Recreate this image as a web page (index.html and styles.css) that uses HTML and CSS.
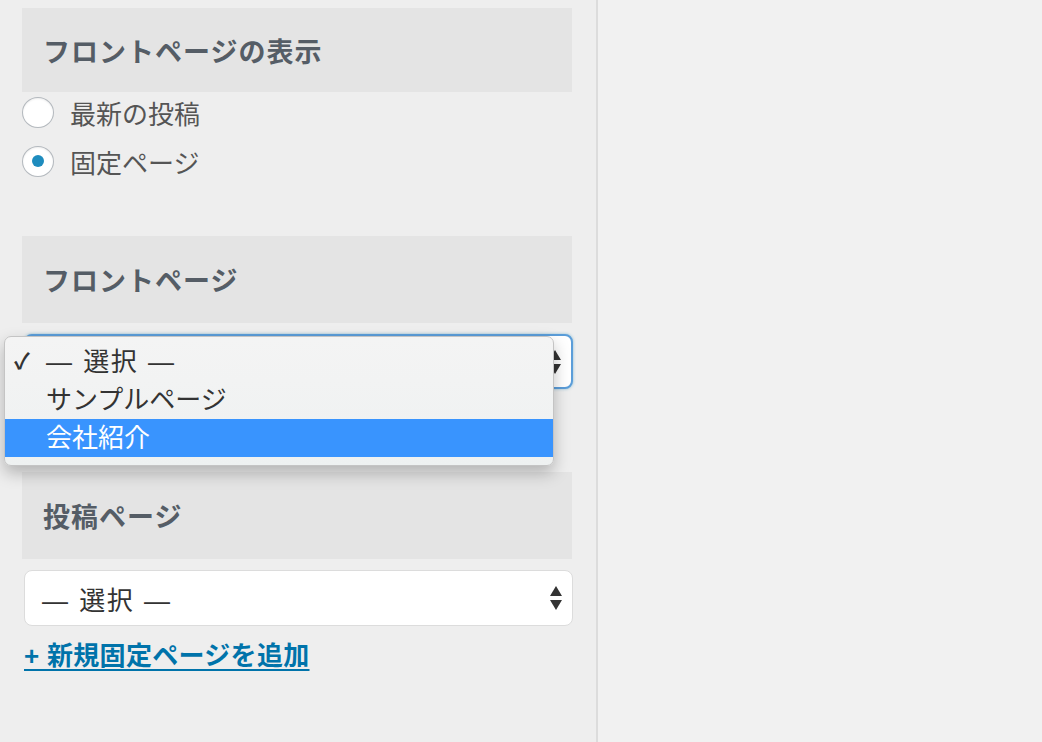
FILE: index.html
```html
<!DOCTYPE html>
<html lang="ja">
<head>
    <meta charset="UTF-8">
    <meta name="viewport" content="width=device-width, initial-scale=1.0">
    <title>ホームページ設定</title>
    <link rel="stylesheet" href="styles.css">
</head>
<body>

    <div class="sidebar">
        <h2 class="section-title">フロントページの表示</h2>

        <ul class="radio-list">
            <li class="radio-item">
                <span class="radio"></span>
                <span>最新の投稿</span>
            </li>
            <li class="radio-item">
                <span class="radio checked"></span>
                <span>固定ページ</span>
            </li>
        </ul>

        <h2 class="section-title spaced">フロントページ</h2>

        <div class="select-wrap">
            <div class="select focus">
                <span class="select-value">— 選択 —</span>
                <span class="arrows"></span>
            </div>

            <!-- opened popup of the select above -->
            <ul class="dropdown">
                <li class="option"><span class="check">✓</span><span class="select-value">— 選択 —</span></li>
                <li class="option">サンプルページ</li>
                <li class="option active">会社紹介</li>
            </ul>
        </div>

        <h2 class="section-title spaced-lg">投稿ページ</h2>

        <div class="select">
            <span class="select-value">— 選択 —</span>
            <span class="arrows"></span>
        </div>

        <a class="add-link" href="#">+ 新規固定ページを追加</a>
    </div>

</body>
</html>
```

FILE: styles.css
```css
* {
    margin: 0;
    padding: 0;
    box-sizing: border-box;
}

body {
    font-family: "Liberation Sans", "Noto Sans CJK JP", sans-serif;
    background-color: #f1f1f1;
    color: #333;
    height: 742px;
    overflow: hidden;
}

.sidebar {
    width: 598px;
    height: 100%;
    padding: 8px 0 0 22px;
    background-color: #eeeeee;
    border-right: 2px solid #dcdcdc;
}

.section-title {
    width: 550px;
    height: 84px;
    display: flex;
    align-items: center;
    padding-left: 21px;
    background-color: #e4e4e4;
    color: #555d66;
    font-size: 27px;
    font-weight: bold;
    letter-spacing: 1px;
}

.section-title.spaced {
    height: 87px;
    margin-top: 59px;
}

.section-title.spaced-lg {
    height: 87px;
    margin-top: 83px;
}

.radio-list {
    list-style: none;
    margin-top: 4px;
}

.radio-item {
    display: flex;
    align-items: center;
    gap: 16px;
    height: 32px;
    font-size: 26px;
    color: #555;
}

.radio-item + .radio-item {
    margin-top: 17px;
}

.radio {
    width: 32px;
    height: 31px;
    border: 1px solid #b4b9be;
    border-radius: 50%;
    background-color: #fff;
    box-shadow: inset 0 1px 2px rgba(0, 0, 0, 0.07);
    display: flex;
    align-items: center;
    justify-content: center;
}

.radio.checked::after {
    content: "";
    width: 12px;
    height: 12px;
    border-radius: 50%;
    background-color: #1e8cbe;
}

.select-wrap {
    position: relative;
}

.select {
    width: 549px;
    height: 56px;
    margin: 11px 0 0 2px;
    padding: 0 10px 0 17px;
    display: flex;
    align-items: center;
    justify-content: space-between;
    background-color: #fff;
    border: 1px solid #dcdcdc;
    border-radius: 8px;
    font-size: 26px;
    color: #333;
}

.select-value {
    letter-spacing: 1.5px;
    word-spacing: 1px;
}

.select.focus {
    height: 55px;
    border: 2px solid #5b9dd9;
    box-shadow: 0 0 3px rgba(30, 140, 190, 0.5);
}

/* hidden behind the open popup */
.select.focus .select-value {
    visibility: hidden;
}

.arrows {
    width: 12px;
    height: 24px;
    display: flex;
    flex-direction: column;
    justify-content: space-between;
}

.arrows::before,
.arrows::after {
    content: "";
    border-left: 6px solid transparent;
    border-right: 6px solid transparent;
}

.arrows::before {
    border-bottom: 10px solid #333;
}

.arrows::after {
    border-top: 10px solid #333;
}

.dropdown {
    position: absolute;
    top: 2px;
    left: -18px;
    width: 550px;
    padding: 6px 0 8px;
    list-style: none;
    background: linear-gradient(to bottom, #f4f4f4, #eef1f1);
    border: 1px solid #c4c4c4;
    border-radius: 7px;
    box-shadow: 0 7px 16px rgba(0, 0, 0, 0.25);
}

.option {
    height: 38px;
    line-height: 38px;
    padding-left: 41px;
    position: relative;
    font-size: 26px;
    color: #333;
}

.option.active {
    background-color: #3994fe;
    color: #fff;
}

.check {
    position: absolute;
    left: 9px;
    font-size: 22px;
    font-weight: bold;
}

.add-link {
    display: inline-block;
    margin: 15px 0 0 2px;
    line-height: 30px;
    font-size: 26px;
    font-weight: bold;
    letter-spacing: 0.3px;
    color: #0073aa;
    text-decoration: underline;
    text-underline-offset: 4px;
}
```
